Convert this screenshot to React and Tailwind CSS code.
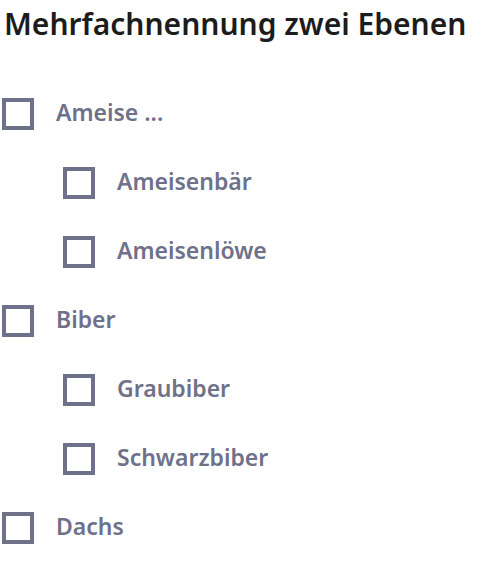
import React from 'react';

const items = [
  { label: 'Ameise ...', children: ['Ameisenbär', 'Ameisenlöwe'] },
  { label: 'Biber', children: ['Graubiber', 'Schwarzbiber'] },
  { label: 'Dachs', children: [] },
];

function Check({ label, nested }) {
  return (
    <label className={`flex items-center gap-[22px] h-8 cursor-pointer ${nested ? 'pl-[63px]' : 'pl-[2px]'}`}>
      <span className="w-8 h-8 border-4 border-[#6e7189] bg-white shrink-0" />
      <span className="text-[23px] font-semibold text-[#6e7189] leading-none pb-[3px]">{label}</span>
    </label>
  );
}

export default function App() {
  return (
    <div className="bg-white min-h-[569px] w-[503px]" style={{ fontFamily: '"Noto Sans", "Open Sans", sans-serif' }}>
      <h1 className="text-[30px] font-semibold text-[#1c1c1c] pl-1 pt-[4px] leading-[40px]">
        Mehrfachnennung zwei Ebenen
      </h1>
      <div className="flex flex-col gap-[37px] mt-[54px]">
        {items.map(item => (
          <React.Fragment key={item.label}>
            <Check label={item.label} />
            {item.children.map(c => (
              <Check key={c} label={c} nested />
            ))}
          </React.Fragment>
        ))}
      </div>
    </div>
  );
}
